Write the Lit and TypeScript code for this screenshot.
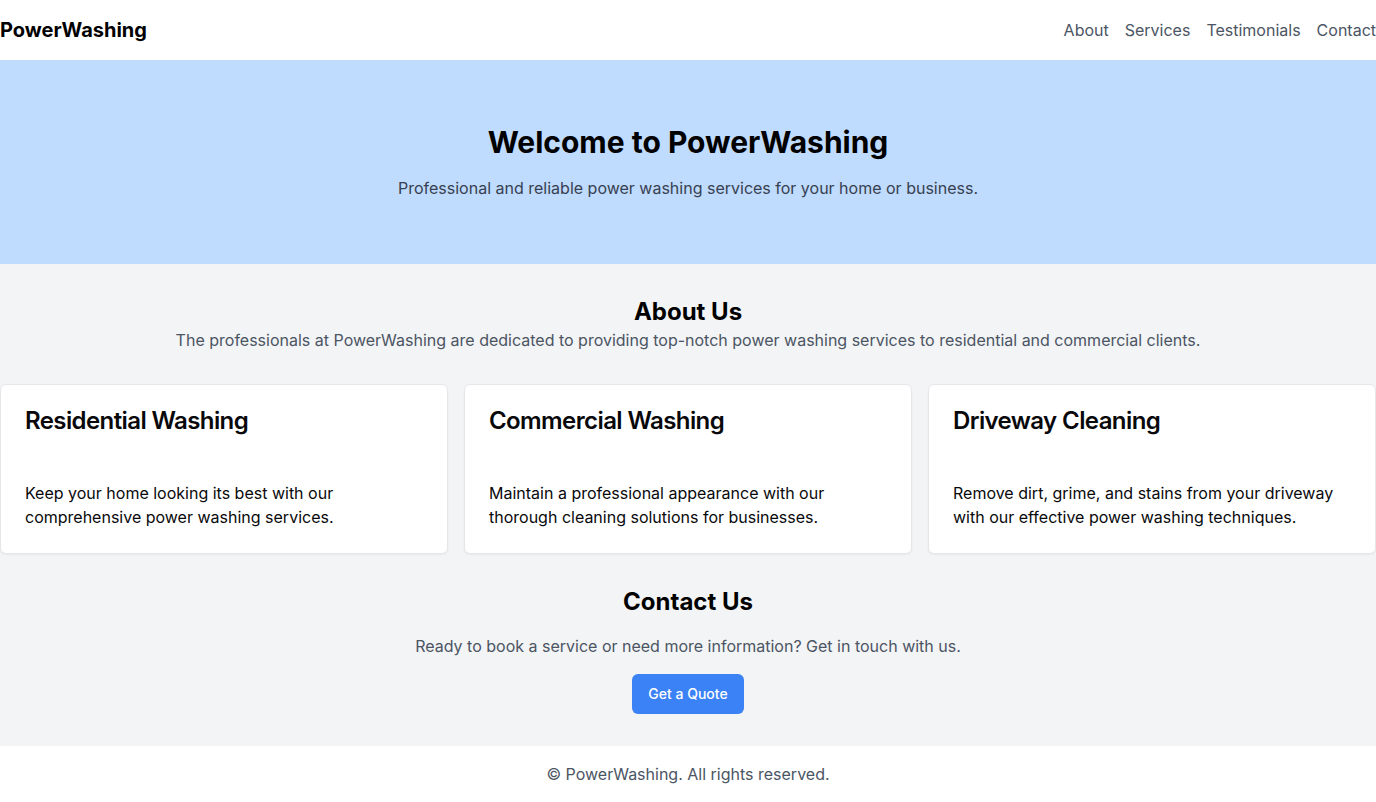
import { LitElement, html, css } from "lit";
import { customElement } from "lit/decorators.js";

interface Service {
  title: string;
  text: string;
}

const links = ["About", "Services", "Testimonials", "Contact"];

const services: Service[] = [
  {
    title: "Residential Washing",
    text: "Keep your home looking its best with our comprehensive power washing services.",
  },
  {
    title: "Commercial Washing",
    text: "Maintain a professional appearance with our thorough cleaning solutions for businesses.",
  },
  {
    title: "Driveway Cleaning",
    text: "Remove dirt, grime, and stains from your driveway with our effective power washing techniques.",
  },
];

@customElement("app-root")
export class AppRoot extends LitElement {
  static styles = css`
    :host {
      display: flex;
      flex-direction: column;
      min-height: 100vh;
      background: #f3f4f6;
      color: #000;
      font-family: Inter, "Liberation Sans", sans-serif;
      font-size: 16px;
      line-height: 24px;
    }
    * {
      box-sizing: border-box;
    }
    h1,
    h2,
    h3,
    p {
      margin: 0;
    }
    .header {
      display: flex;
      justify-content: space-between;
      align-items: center;
      padding: 16px 0;
      background: #fff;
    }
    .brand {
      font-size: 20px;
      line-height: 28px;
      font-weight: 700;
    }
    .nav {
      display: flex;
      gap: 16px;
    }
    .nav a {
      color: #4b5563;
      text-decoration: none;
    }
    .hero {
      padding: 64px 0;
      background: #bfdbfe;
      text-align: center;
    }
    .hero h1 {
      margin-bottom: 16px;
      font-size: 30px;
      line-height: 36px;
      font-weight: 700;
    }
    .hero p {
      color: #374151;
    }
    .main {
      flex: 1;
      padding: 32px 0;
    }
    .main h2 {
      font-size: 24px;
      line-height: 32px;
      font-weight: 700;
    }
    .muted {
      color: #4b5563;
    }
    .about,
    .contact {
      text-align: center;
    }
    .services {
      display: grid;
      grid-template-columns: repeat(3, 1fr);
      gap: 16px;
      margin: 32px 0;
    }
    .card {
      border: 1px solid #e5e7eb;
      border-radius: 6px;
      background: #fff;
      box-shadow: 0 1px 2px rgba(0, 0, 0, 0.05);
      color: #09090b;
    }
    .card h3 {
      padding: 24px;
      font-size: 24px;
      line-height: 24px;
      font-weight: 600;
      letter-spacing: -0.025em;
    }
    .card p {
      padding: 24px;
    }
    .contact {
      display: flex;
      flex-direction: column;
      align-items: center;
      gap: 16px;
    }
    .quote {
      height: 40px;
      padding: 8px 16px;
      border: 0;
      border-radius: 6px;
      background: #3b82f6;
      color: #fff;
      font: 500 14px/20px Inter, "Liberation Sans", sans-serif;
      cursor: pointer;
    }
    .footer {
      padding: 16px 0;
      background: #fff;
      text-align: center;
    }
  `;

  render() {
    return html`
      <header class="header">
        <div class="brand">PowerWashing</div>
        <nav class="nav">
          ${links.map((name) => html`<a href="#${name.toLowerCase()}">${name}</a>`)}
        </nav>
      </header>
      <section class="hero">
        <h1>Welcome to PowerWashing</h1>
        <p>Professional and reliable power washing services for your home or business.</p>
      </section>
      <main class="main">
        <section class="about" id="about">
          <h2>About Us</h2>
          <p class="muted">
            The professionals at PowerWashing are dedicated to providing top-notch power washing services to
            residential and commercial clients.
          </p>
        </section>
        <section class="services" id="services">
          ${services.map(
            (service) => html`
              <article class="card">
                <h3>${service.title}</h3>
                <p>${service.text}</p>
              </article>
            `
          )}
        </section>
        <section class="contact" id="contact">
          <h2>Contact Us</h2>
          <p class="muted">Ready to book a service or need more information? Get in touch with us.</p>
          <button class="quote" type="button">Get a Quote</button>
        </section>
      </main>
      <footer class="footer">
        <p class="muted">© PowerWashing. All rights reserved.</p>
      </footer>
    `;
  }
}
